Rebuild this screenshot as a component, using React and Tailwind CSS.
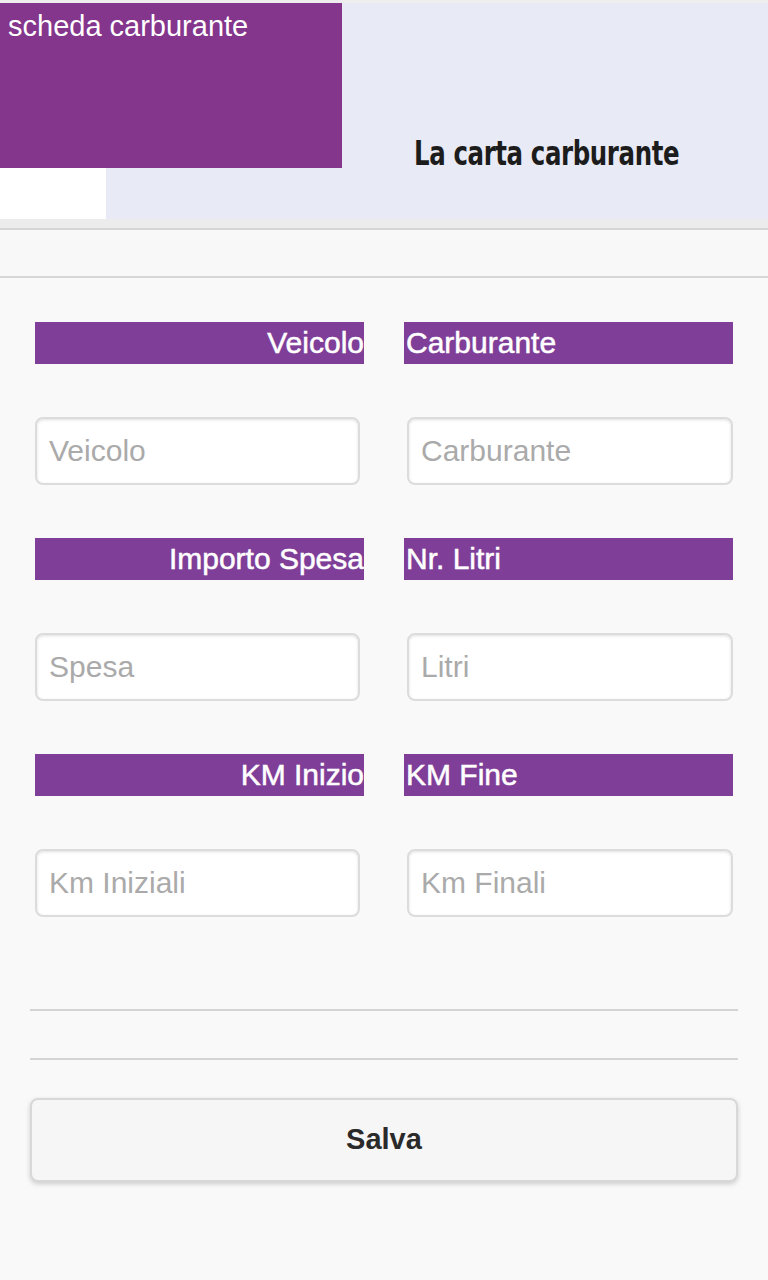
import React from "react";

const rows = [
  { left: "Veicolo", right: "Carburante", leftPh: "Veicolo", rightPh: "Carburante" },
  { left: "Importo Spesa", right: "Nr. Litri", leftPh: "Spesa", rightPh: "Litri" },
  { left: "KM Inizio", right: "KM Fine", leftPh: "Km Iniziali", rightPh: "Km Finali" },
];

const inputClass =
  "h-[68px] w-full rounded-[8px] border-2 border-[#dcdcdc] bg-white px-[12px] text-[30px] text-[#333] placeholder:text-[#aaaaaa] shadow-[inset_0_1px_3px_rgba(0,0,0,0.12)] outline-none";

const labelClass =
  "flex h-[42px] items-center bg-[#7f3f98] text-[30px] leading-none text-white [-webkit-text-stroke:0.5px_white]";

export default function App() {
  return (
    <div className="min-h-[1280px] bg-[#f9f9f9] font-['Liberation_Sans',Arial,sans-serif]">
      {/* banner */}
      <div className="flex h-[219px] border-t-[3px] border-[#eeeeee] bg-[#e8eaf5]">
        <div className="flex w-[342px] flex-col">
          <div className="h-[165px] bg-[#84358c] pl-[8px] pt-[9px] text-[29px] leading-none text-white">
            scheda carburante
          </div>
          <div className="h-[51px] w-[106px] bg-white" />
        </div>
        <div className="flex-1 pl-[72px] pt-[133px]">
          <span className="inline-block origin-left scale-x-[0.8] font-['DejaVu_Sans_Condensed','DejaVu_Sans',sans-serif] text-[34px] font-bold leading-none tracking-[-0.5px] text-[#1c1c1c]">
            La carta carburante
          </span>
        </div>
      </div>
      <div className="h-[11px] border-b-2 border-[#d6d6d6] bg-[#ececec]" />
      <div className="h-[48px] border-b-2 border-[#d6d6d6] bg-[#f8f8f8]" />

      {/* form */}
      <div className="px-[35px] pt-[44px]">
        {rows.map((r) => (
          <div key={r.left} className="mb-[53px] grid grid-cols-2 gap-x-[40px]">
            <div className={`${labelClass} justify-end`}>{r.left}</div>
            <div className={`${labelClass} pl-[2px]`}>{r.right}</div>
            <div className="mr-[4px] mt-[53px]">
              <input className={inputClass} placeholder={r.leftPh} />
            </div>
            <div className="ml-[3px] mt-[53px]">
              <input className={inputClass} placeholder={r.rightPh} />
            </div>
          </div>
        ))}
      </div>

      <div className="px-[30px] pt-[39px]">
        <div className="h-[2px] bg-[#d4d4d4]" />
        <div className="mt-[47px] h-[2px] bg-[#d4d4d4]" />
        <button
          type="button"
          className="mt-[38px] flex h-[84px] w-full items-center justify-center rounded-[8px] border-2 border-[#d8d8d8] bg-[#f6f6f6] text-[29px] font-bold text-[#2a2a2a] shadow-[0_2px_5px_rgba(0,0,0,0.18)]"
        >
          Salva
        </button>
      </div>
    </div>
  );
}
